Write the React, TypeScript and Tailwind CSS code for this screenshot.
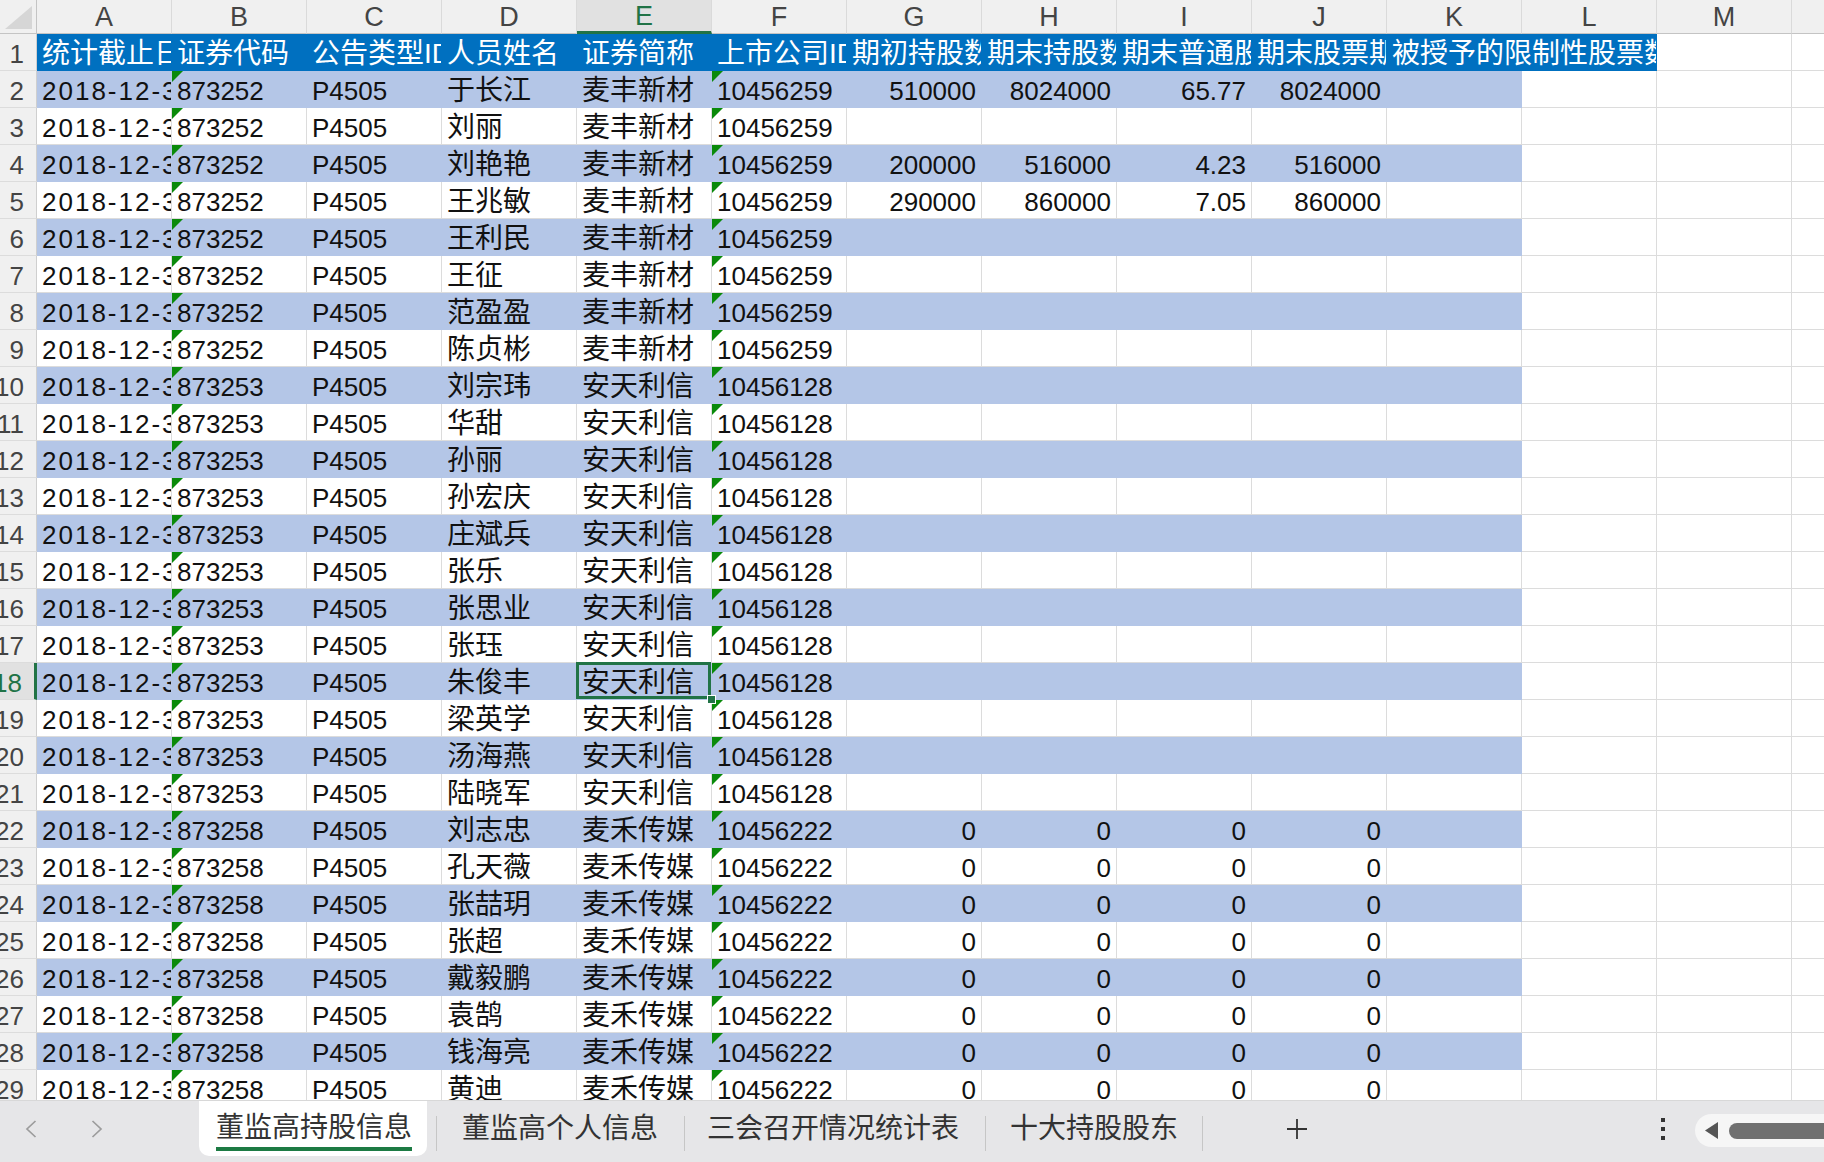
import React from 'react';

const LETTERS = ['A', 'B', 'C', 'D', 'E', 'F', 'G', 'H', 'I', 'J', 'K', 'L', 'M'];

const HEADERS = [
  '统计截止日期',
  '证券代码',
  '公告类型ID',
  '人员姓名',
  '证券简称',
  '上市公司ID',
  '期初持股数',
  '期末持股数',
  '期末普通股持股比例',
  '期末股票期权数量',
  '被授予的限制性股票数量',
];

interface IRecord {
  code: string;
  name: string;
  short: string;
  orgId: string;
  nums?: string[];
}

const group = (code: string, short: string, orgId: string, names: string[], nums?: string[]): IRecord[] =>
  names.map((name) => ({ code, name, short, orgId, nums }));

const records: IRecord[] = [
  { code: '873252', name: '于长江', short: '麦丰新材', orgId: '10456259', nums: ['510000', '8024000', '65.77', '8024000'] },
  { code: '873252', name: '刘丽', short: '麦丰新材', orgId: '10456259' },
  { code: '873252', name: '刘艳艳', short: '麦丰新材', orgId: '10456259', nums: ['200000', '516000', '4.23', '516000'] },
  { code: '873252', name: '王兆敏', short: '麦丰新材', orgId: '10456259', nums: ['290000', '860000', '7.05', '860000'] },
  ...group('873252', '麦丰新材', '10456259', ['王利民', '王征', '范盈盈', '陈贞彬']),
  ...group('873253', '安天利信', '10456128', [
    '刘宗玮',
    '华甜',
    '孙丽',
    '孙宏庆',
    '庄斌兵',
    '张乐',
    '张思业',
    '张珏',
    '朱俊丰',
    '梁英学',
    '汤海燕',
    '陆晓军',
  ]),
  ...group(
    '873258',
    '麦禾传媒',
    '10456222',
    ['刘志忠', '孔天薇', '张喆玥', '张超', '戴毅鹏', '袁鹄', '钱海亮', '黄迪'],
    ['0', '0', '0', '0'],
  ),
];

const SELECTED_ROW = 18;

const GreenMark = () => (
  <svg className="absolute left-0 top-0" width="11" height="11" viewBox="0 0 11 11">
    <polygon points="0,0 11,0 0,11" fill="#0a8a0a" />
  </svg>
);

interface ICellProps {
  text?: string;
  right?: boolean;
  fill?: 'band' | 'head';
  mark?: boolean;
  selected?: boolean;
  date?: boolean;
  wide?: boolean;
}

const Cell = ({ text = '', right, fill, mark, selected, date, wide }: ICellProps) => {
  const cjk = /[\u4e00-\u9fff]/.test(text);
  return (
    <div
      className={[
        'relative h-full shrink-0 border-b border-r',
        wide ? 'w-[270px]' : 'w-[135px]',
        fill === 'head'
          ? 'border-[#0070c0] bg-[#0070c0] text-white'
          : fill === 'band'
            ? 'border-[#b4c6e7] bg-[#b4c6e7] text-[#111]'
            : 'border-[#dcdcdc] bg-white text-[#111]',
      ].join(' ')}
    >
      <div
        className={[
          'flex h-full w-full items-center overflow-hidden whitespace-nowrap px-[5px] pt-[3px]',
          right ? 'justify-end' : 'justify-start',
          cjk ? 'text-[28px]' : 'text-[26px]',
          date ? 'tracking-[2px]' : '',
        ].join(' ')}
      >
        <span className="leading-none">{text}</span>
      </div>
      {mark && <GreenMark />}
      {selected && (
        <>
          <div className="pointer-events-none absolute -left-px -top-px bottom-0 right-0 z-10 border-[3px] border-[#217346]" />
          <div className="absolute -bottom-[5px] -right-[5px] z-10 h-[9px] w-[9px] border border-white bg-[#217346]" />
        </>
      )}
    </div>
  );
};

const RowNumber = ({ n }: { n: number }) => {
  const active = n === SELECTED_ROW;
  return (
    <div
      className={[
        'flex h-full w-[37px] shrink-0 items-center justify-end overflow-hidden whitespace-nowrap border-b border-[#dcdcdc] pr-[12px] pt-[3px] text-[26px] leading-none',
        active
          ? 'border-r-[3px] border-r-[#217346] bg-[#e1e1e1] text-[#217346]'
          : 'border-r border-r-[#cfcfcf] bg-[#f0f0f0] text-[#444]',
      ].join(' ')}
    >
      {n}
    </div>
  );
};

const ColumnHeader = () => (
  <div className="flex h-[34px]">
    <div className="relative h-full w-[37px] shrink-0 border-b border-r border-[#c4c4c4] bg-[#f0f0f0]">
      <svg className="absolute left-[5px] top-[6px]" width="27" height="23" viewBox="0 0 27 23">
        <polygon points="0,23 27,23 27,0" fill="#d6d6d6" />
      </svg>
    </div>
    {LETTERS.map((l) => (
      <div
        key={l}
        className={[
          'flex h-full w-[135px] shrink-0 items-center justify-center border-r border-r-[#dadada] pt-[1px] text-[27px] leading-none',
          l === 'E'
            ? 'border-b-[3px] border-b-[#217346] bg-[#e1e1e1] text-[#217346]'
            : 'border-b border-b-[#c4c4c4] bg-[#f0f0f0] text-[#444]',
        ].join(' ')}
      >
        {l}
      </div>
    ))}
    <div className="h-full flex-1 border-b border-[#c4c4c4] bg-[#f0f0f0]" />
  </div>
);

const HeaderRow = () => (
  <div className="flex h-[37px]">
    <RowNumber n={1} />
    {HEADERS.map((h, i) => (
      <Cell key={h} text={h} fill="head" wide={i === 10} />
    ))}
    <Cell />
    <div className="h-full flex-1 border-b border-[#dcdcdc] bg-white" />
  </div>
);

const DataRow = ({ r, n }: { r: IRecord; n: number }) => {
  const band = n % 2 === 0 ? 'band' : undefined;
  const nums = r.nums ?? ['', '', '', ''];
  return (
    <div className="flex h-[37px]">
      <RowNumber n={n} />
      <Cell text="2018-12-31" fill={band} date />
      <Cell text={r.code} fill={band} mark />
      <Cell text="P4505" fill={band} />
      <Cell text={r.name} fill={band} />
      <Cell text={r.short} fill={band} selected={n === SELECTED_ROW} />
      <Cell text={r.orgId} fill={band} mark />
      {nums.map((v, i) => (
        <Cell key={i} text={v} fill={band} right />
      ))}
      <Cell fill={band} />
      <Cell />
      <Cell />
      <div className="h-full flex-1 border-b border-[#dcdcdc] bg-white" />
    </div>
  );
};

const Divider = () => <div className="mt-[15px] h-[35px] w-px shrink-0 bg-[#c6c6c6]" />;

const SheetTab = ({ label, className }: { label: string; className: string }) => (
  <div className={`flex h-[55px] shrink-0 items-center text-[28px] leading-none text-[#333] ${className}`}>{label}</div>
);

const TabBar = () => (
  <div className="flex h-[62px] items-start overflow-hidden border-t border-[#d8d8d8] bg-[#e6e6e8]">
    <div className="flex h-[55px] w-[199px] shrink-0 items-center gap-[54px] pl-[25px]">
      <svg width="12" height="18" viewBox="0 0 12 18">
        <polyline points="10.5,1 2,9 10.5,17" fill="none" stroke="#9c9c9c" strokeWidth="1.7" />
      </svg>
      <svg width="12" height="18" viewBox="0 0 12 18">
        <polyline points="1.5,1 10,9 1.5,17" fill="none" stroke="#9c9c9c" strokeWidth="1.7" />
      </svg>
    </div>
    <div className="-mt-px flex h-[56px] w-[228px] shrink-0 flex-col rounded-b-[10px] bg-white pl-[17px] pt-[10px]">
      <span className="text-[28px] leading-[36px] text-[#333]">董监高持股信息</span>
      <div className="mt-[1px] h-[4px] w-[196px] bg-[#1c7a43]" />
    </div>
    <div className="ml-[9px] flex shrink-0">
      <Divider />
    </div>
    <SheetTab label="董监高个人信息" className="ml-[25px]" />
    <div className="ml-[26px] flex shrink-0">
      <Divider />
    </div>
    <SheetTab label="三会召开情况统计表" className="ml-[22px]" />
    <div className="ml-[26px] flex shrink-0">
      <Divider />
    </div>
    <SheetTab label="十大持股股东" className="ml-[24px]" />
    <div className="ml-[24px] flex shrink-0">
      <Divider />
    </div>
    <div className="ml-[83px] flex h-[55px] shrink-0 items-center">
      <svg width="22" height="22" viewBox="0 0 22 22">
        <path d="M11 1v20M1 11h20" stroke="#333" strokeWidth="1.8" />
      </svg>
    </div>
    <div className="ml-[352px] flex h-[55px] shrink-0 items-center">
      <svg width="6" height="22" viewBox="0 0 6 22">
        <rect x="1" y="0" width="4" height="4" fill="#333" />
        <rect x="1" y="9" width="4" height="4" fill="#333" />
        <rect x="1" y="18" width="4" height="4" fill="#333" />
      </svg>
    </div>
    <div className="ml-[29px] mt-[13px] flex h-[33px] flex-1 items-center rounded-l-full bg-[#f6f6f6] pl-[10px]">
      <svg width="13" height="17" viewBox="0 0 13 17">
        <polygon points="13,0 13,17 0,8.5" fill="#555" />
      </svg>
      <div className="ml-[11px] h-[16px] flex-1 rounded-l-full bg-[#707070]" />
    </div>
  </div>
);

export default function App() {
  return (
    <div className="flex h-[1162px] w-[1824px] flex-col overflow-hidden bg-white font-['Liberation_Sans','Noto_Sans_CJK_SC',sans-serif]">
      <div className="h-[1100px] shrink-0 overflow-hidden">
        <ColumnHeader />
        <HeaderRow />
        {records.map((r, i) => (
          <DataRow key={i} r={r} n={i + 2} />
        ))}
      </div>
      <TabBar />
    </div>
  );
}
